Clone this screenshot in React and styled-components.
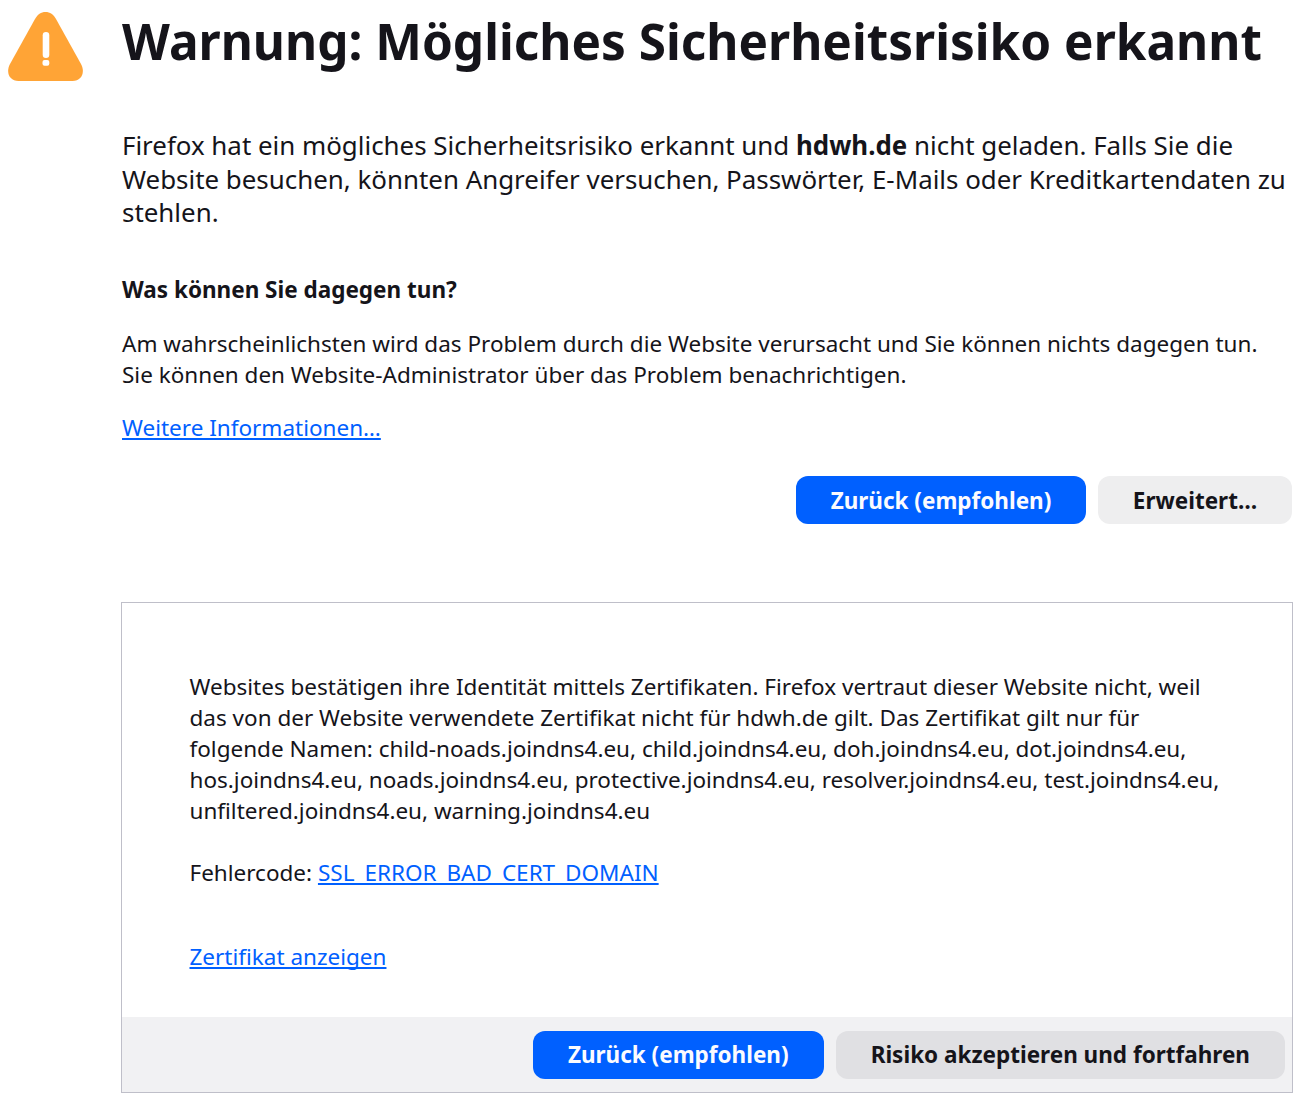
import React from "react";
import styled, { createGlobalStyle } from "styled-components";

const GlobalStyle = createGlobalStyle`
  html, body {
    margin: 0;
    padding: 0;
    background: #fff;
  }
  body {
    font-family: "Noto Sans", sans-serif;
    font-size: 22.5px;
    line-height: 31px;
    color: #15141a;
  }
`;

const Page = styled.div`
  display: flex;
  align-items: flex-start;
  width: 1298px;
  height: 1113px;
  box-sizing: border-box;
  overflow: hidden;
`;

const IconColumn = styled.div`
  flex: 0 0 122px;
  padding: 12px 0 0 8px;
  box-sizing: border-box;
`;

const Main = styled.main`
  width: 1171px;
`;

const Title = styled.h1`
  margin: 0;
  padding-top: 6px;
  font-size: 49.5px;
  line-height: 70px;
  font-weight: 700;
  white-space: nowrap;
`;

const Intro = styled.p`
  margin: 53px 0 0;
  font-size: 25.9px;
  line-height: 33.5px;
  width: 1170px;

  b {
    font-weight: 700;
  }
`;

const Question = styled.h2`
  margin: 44px 0 0;
  font-size: 22.5px;
  line-height: 31px;
  font-weight: 700;
`;

const Text = styled.p`
  margin: ${({ $top }) => $top || 0}px 0 0;
`;

const Link = styled.a`
  color: #0060ff;
  text-decoration: underline;
  text-decoration-skip-ink: none;
`;

const Actions = styled.div`
  display: flex;
  justify-content: flex-end;
  gap: 12px;
  margin: 33.5px ${({ $inset }) => $inset || 0}px 0 0;
`;

const Button = styled.button`
  height: 48px;
  width: ${({ $width }) => ($width ? `${$width}px` : "auto")};
  padding: 0 ${({ $width }) => ($width ? 0 : 35)}px;
  border: none;
  border-radius: 12px;
  font-family: inherit;
  font-size: 22.5px;
  font-weight: 700;
  color: ${({ $primary }) => ($primary ? "#fbfbfe" : "#15141a")};
  background: ${({ $primary, $bg }) => ($primary ? "#0060ff" : $bg || "#eeeeef")};
`;

const Panel = styled.section`
  margin-top: 77.5px;
  width: 1172px;
  margin-left: -1px;
  height: 491px;
  box-sizing: border-box;
  border: 1px solid #bfbfc9;
  display: flex;
  flex-direction: column;
`;

const PanelBody = styled.div`
  flex: 1;
  padding: 68px 67.5px 0;
`;

const PanelFooter = styled.div`
  background: #f1f1f3;
  height: 75px;
  padding: 14px 7px 0 0;
  box-sizing: border-box;

  ${Actions} {
    margin: 0;
  }
`;

function WarningIcon() {
  return (
    <svg width="75" height="70" viewBox="0 0 75 70">
      <path
        d="M37.5 0C33 0 29.500 2.500 27 7L2 52C-2.500 60.500 1.500 69 10.500 69H64.500C73.500 69 77.500 60.500 73 52L48 7C45.500 2.500 42 0 37.500 0Z"
        fill="#ffa436"
      />
      <rect x="34.700" y="20" width="6.600" height="26" rx="3.300" fill="#fff" />
      <rect x="34.500" y="48" width="6.800" height="5.800" rx="2" fill="#fff" />
    </svg>
  );
}

export default function App() {
  return (
    <Page>
      <GlobalStyle />
      <IconColumn>
        <WarningIcon />
      </IconColumn>
      <Main>
        <Title>Warnung: Mögliches Sicherheitsrisiko erkannt</Title>
        <Intro>
          Firefox hat ein mögliches Sicherheitsrisiko erkannt und <b>hdwh.de</b> nicht geladen. Falls Sie die Website besuchen, könnten Angreifer versuchen, Passwörter, E-Mails oder Kreditkartendaten zu stehlen.
        </Intro>
        <Question>Was können Sie dagegen tun?</Question>
        <Text $top={23}>
          Am wahrscheinlichsten wird das Problem durch die Website verursacht und Sie können nichts dagegen tun.
          <br />
          Sie können den Website-Administrator über das Problem benachrichtigen.
        </Text>
        <Text $top={22}>
          <Link href="#">Weitere Informationen…</Link>
        </Text>
        <Actions $inset={1}>
          <Button $primary $width={290}>Zurück (empfohlen)</Button>
          <Button $width={194}>Erweitert…</Button>
        </Actions>
        <Panel>
          <PanelBody>
            <Text>
              Websites bestätigen ihre Identität mittels Zertifikaten. Firefox vertraut dieser Website nicht, weil das von der Website verwendete Zertifikat nicht für hdwh.de gilt. Das Zertifikat gilt nur für folgende Namen: child-noads.joindns4.eu, child.joindns4.eu, doh.joindns4.eu, dot.joindns4.eu, hos.joindns4.eu, noads.joindns4.eu, protective.joindns4.eu, resolver.joindns4.eu, test.joindns4.eu, unfiltered.joindns4.eu, warning.joindns4.eu
            </Text>
            <Text $top={31}>
              Fehlercode: <Link href="#">SSL_ERROR_BAD_CERT_DOMAIN</Link>
            </Text>
            <Text $top={53}>
              <Link href="#">Zertifikat anzeigen</Link>
            </Text>
          </PanelBody>
          <PanelFooter>
            <Actions>
              <Button $primary>Zurück (empfohlen)</Button>
              <Button $bg="#e0e0e3">Risiko akzeptieren und fortfahren</Button>
            </Actions>
          </PanelFooter>
        </Panel>
      </Main>
    </Page>
  );
}
